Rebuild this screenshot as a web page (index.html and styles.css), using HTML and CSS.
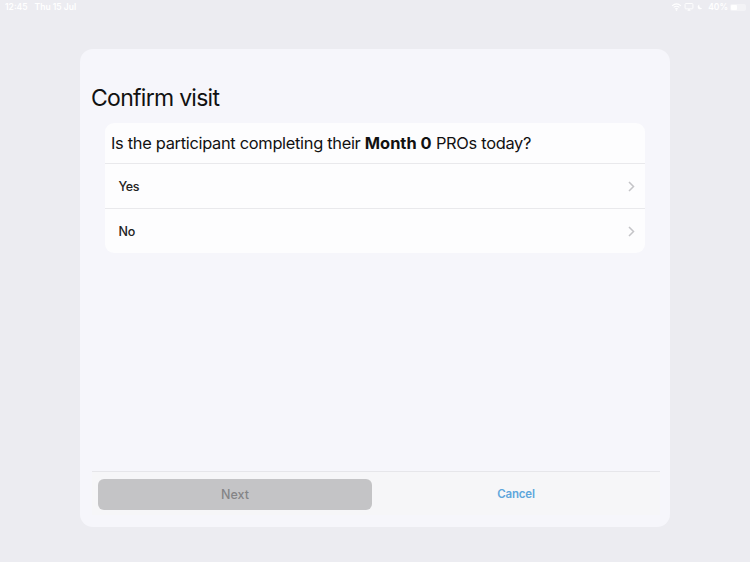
FILE: index.html
```html
<!DOCTYPE html>
<html lang="en">
<head>
<meta charset="utf-8">
<title>Confirm visit</title>
<link rel="stylesheet" href="styles.css">
</head>
<body>
<div class="status">
  <div class="status-left"><span>12:45</span><span>Thu 15 Jul</span></div>
  <div class="status-right">
    <svg class="ic-wifi" viewBox="0 0 12 9" width="11" height="8"><path d="M1 3.2C4 .6 8 .6 11 3.2M2.8 5C4.8 3.4 7.2 3.4 9.2 5M4.5 6.7C5.4 6 6.6 6 7.5 6.7" fill="none" stroke="#fff" stroke-width="1.2"/><circle cx="6" cy="8" r=".9" fill="#fff"/></svg>
    <svg class="ic-screen" viewBox="0 0 10 9" width="10" height="8"><rect x=".6" y=".6" width="8.8" height="6" rx=".8" fill="none" stroke="#fff" stroke-width="1"/><path d="M3 8.600h4L5 6.400z" fill="#fff"/></svg>
    <svg class="ic-moon" viewBox="0 0 8 9" width="6" height="8"><path d="M3 1c-.5 3 1 5 4 5.200C5.500 8.500 1.500 8 1 5 .8 3.300 1.500 1.800 3 1z" fill="#fff"/></svg>
    <span>40%</span>
    <div class="battery"><div class="battery-fill"></div></div>
  </div>
</div>
<main class="panel">
  <h1 class="title">Confirm visit</h1>
  <section class="card">
    <div class="question">Is the participant completing their <b>Month 0</b> PROs today?</div>
    <div class="row"><span>Yes</span>
      <svg class="chev" viewBox="0 0 7 11" width="7" height="11"><path d="M1 1l4.500 4.500L1 10" fill="none" stroke="#c4c4c7" stroke-width="1.500"/></svg>
    </div>
    <div class="row"><span>No</span>
      <svg class="chev" viewBox="0 0 7 11" width="7" height="11"><path d="M1 1l4.500 4.500L1 10" fill="none" stroke="#c4c4c7" stroke-width="1.500"/></svg>
    </div>
  </section>
  <footer class="footer">
    <button class="btn-next" type="button">Next</button>
    <button class="btn-cancel" type="button">Cancel</button>
  </footer>
</main>
</body>
</html>
```
FILE: styles.css
```css
* { box-sizing: border-box; }
html, body { margin: 0; height: 562px; overflow: hidden; }
body {
  background: #ececf1;
  font-family: Inter, "Liberation Sans", sans-serif;
  color: #111;
  display: flex;
  flex-direction: column;
}
.status {
  height: 49px;
  flex: none;
  padding: 1px 4px 0 5px;
  display: flex;
  justify-content: space-between;
  align-items: flex-start;
  color: #fff;
  font-size: 8.5px;
  line-height: 12px;
  font-weight: 600;
}
.status-left { display: flex; gap: 7px; }
.status-right { display: flex; align-items: center; gap: 2px; }
.ic-moon { margin-left: 1px; }
.status-right span { margin-left: 3px; }
.battery {
  width: 16px;
  height: 7px;
  border-radius: 2px;
  background: rgba(255,255,255,.4);
  padding: 1px;
}
.battery-fill { width: 6px; height: 5px; background: #fff; border-radius: 1px; }
.panel {
  width: 590px;
  height: 478px;
  margin-left: 80px;
  background: #f6f6fb;
  border-radius: 13px;
  padding: 0 10px 12px 12px;
  display: flex;
  flex-direction: column;
}
.title {
  margin: 33px 0 9px -1px;
  font-size: 23px;
  line-height: 32px;
  font-weight: 400;
  letter-spacing: -.72px;
  color: #111;
}
.card {
  width: 540px;
  margin-left: 13px;
  background: #fdfdfe;
  border-radius: 9px;
  overflow: hidden;
}
.question {
  height: 41px;
  padding: 0 6px;
  line-height: 40px;
  font-size: 16.4px;
  letter-spacing: -.3px;
  white-space: nowrap;
  border-bottom: 1px solid #e9e9ec;
}
.question b { font-weight: 700; letter-spacing: .02px; }
.row {
  height: 44px;
  padding: 0 10px 0 13.5px;
  display: flex;
  align-items: center;
  justify-content: space-between;
  font-size: 12.5px;
  font-weight: 500;
  letter-spacing: -.3px;
  color: #222;
}
.row + .row { border-top: 1px solid #e9e9ec; height: 45px; }
.footer {
  margin-top: auto;
  height: 44px;
  border-top: 1px solid #e6e6ea;
  background: #f6f6f8;
  padding-top: 7px;
  padding-left: 6px;
  display: flex;
  align-items: flex-start;
}
.btn-next {
  width: 274px;
  height: 31px;
  border: 0;
  border-radius: 6px;
  background: #c4c4c6;
  color: #848486;
  font: 500 12.5px Inter, "Liberation Sans", sans-serif;
}
.btn-cancel {
  flex: 1;
  height: 30px;
  border: 0;
  background: none;
  color: #5ea6dc;
  font: 600 11.5px Inter, "Liberation Sans", sans-serif;
  letter-spacing: -.2px;
}
```
